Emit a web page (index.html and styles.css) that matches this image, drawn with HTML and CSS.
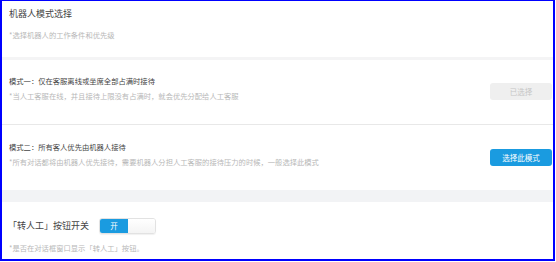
FILE: index.html
```html
<!DOCTYPE html>
<html lang="zh-CN">
<head>
  <meta charset="UTF-8">
  <title>机器人模式选择</title>
  <link rel="stylesheet" href="styles.css">
</head>
<body>
  <div class="panel">
    <div class="head">
      <h1>机器人模式选择</h1>
      <p class="tip">*选择机器人的工作条件和优先级</p>
    </div>

    <div class="mode">
      <div class="mode-info">
        <h2>模式一：仅在客服离线或坐席全部占满时接待</h2>
        <p class="tip">*当人工客服在线，并且接待上限没有占满时，就会优先分配给人工客服</p>
      </div>
      <button class="btn btn-off">已选择</button>
    </div>

    <div class="mode mode-last">
      <div class="mode-info">
        <h2>模式二：所有客人优先由机器人接待</h2>
        <p class="tip">*所有对话都将由机器人优先接待，需要机器人分担人工客服的接待压力的时候，一般选择此模式</p>
      </div>
      <button class="btn btn-on">选择此模式</button>
    </div>

    <div class="band"></div>

    <div class="switch-box">
      <div class="switch-row">
        <span class="switch-label">「转人工」按钮开关</span>
        <div class="switch">
          <span class="switch-on">开</span>
          <span class="switch-knob"></span>
        </div>
      </div>
      <p class="tip foot-tip">*是否在对话框窗口显示「转人工」按钮。</p>
    </div>
  </div>
</body>
</html>
```

FILE: styles.css
```css
body {
  margin: 0;
  padding: 0;
  background-color: #fff;
  font-family: "Noto Sans CJK SC", "Noto Sans", sans-serif;
  color: #333;
}

.panel {
  width: 555px;
  height: 261px;
  box-sizing: border-box;
  border: 2px solid #0000ff;
  border-top-width: 1px;
  background-color: #fff;
  overflow: hidden;
}

.head {
  padding: 5px 7px 16px;
  border-bottom: 3px solid #f4f4f5;
}

.head h1 {
  margin: 0;
  font-size: 9px;
  line-height: 16px;
  font-weight: normal;
  color: #444;
}

.tip {
  margin: 0;
  font-size: 7.3px;
  line-height: 12px;
  color: #b8b8b8;
  white-space: nowrap;
}

.head .tip {
  margin-top: 7px;
}

.mode {
  display: flex;
  align-items: center;
  justify-content: space-between;
  padding: 15px 1px 22px 7px;
  border-bottom: 1px solid #e8e8e8;
}

.mode-last {
  padding-top: 16px;
  border-bottom: none;
}

.mode h2 {
  margin: 0 0 3px;
  font-size: 7.3px;
  line-height: 12px;
  font-weight: normal;
  color: #444;
}

.btn {
  width: 62px;
  height: 17px;
  margin-top: 5px;
  padding: 0;
  border: none;
  border-radius: 3px;
  font-family: "Noto Sans CJK SC", sans-serif;
  font-size: 7.5px;
  line-height: 17px;
  flex-shrink: 0;
}

.btn-off {
  background-color: #efefef;
  color: #c6c6c6;
}

.btn-on {
  background-color: #1a9be0;
  color: #fff;
}

.band {
  height: 12px;
  background-color: #f2f3f5;
}

.switch-box {
  padding: 16px 7px 0;
}

.switch-row {
  display: flex;
  align-items: center;
}

.switch-label {
  font-size: 9px;
  line-height: 16px;
  color: #444;
  margin-left: -1px;
}

.switch {
  display: flex;
  width: 57px;
  height: 16px;
  margin-left: 10px;
  box-sizing: border-box;
  border: 1px solid #e2e2e2;
  border-radius: 3px;
  overflow: hidden;
  box-shadow: 0 1px 1px rgba(0, 0, 0, 0.06);
}

.switch-on {
  width: 28px;
  background-color: #1a9be0;
  color: #fff;
  font-size: 7.5px;
  line-height: 14px;
  text-align: center;
}

.switch-knob {
  flex: 1;
  background: linear-gradient(#fff, #f4f4f4);
}

.foot-tip {
  margin-top: 8px;
}
```
